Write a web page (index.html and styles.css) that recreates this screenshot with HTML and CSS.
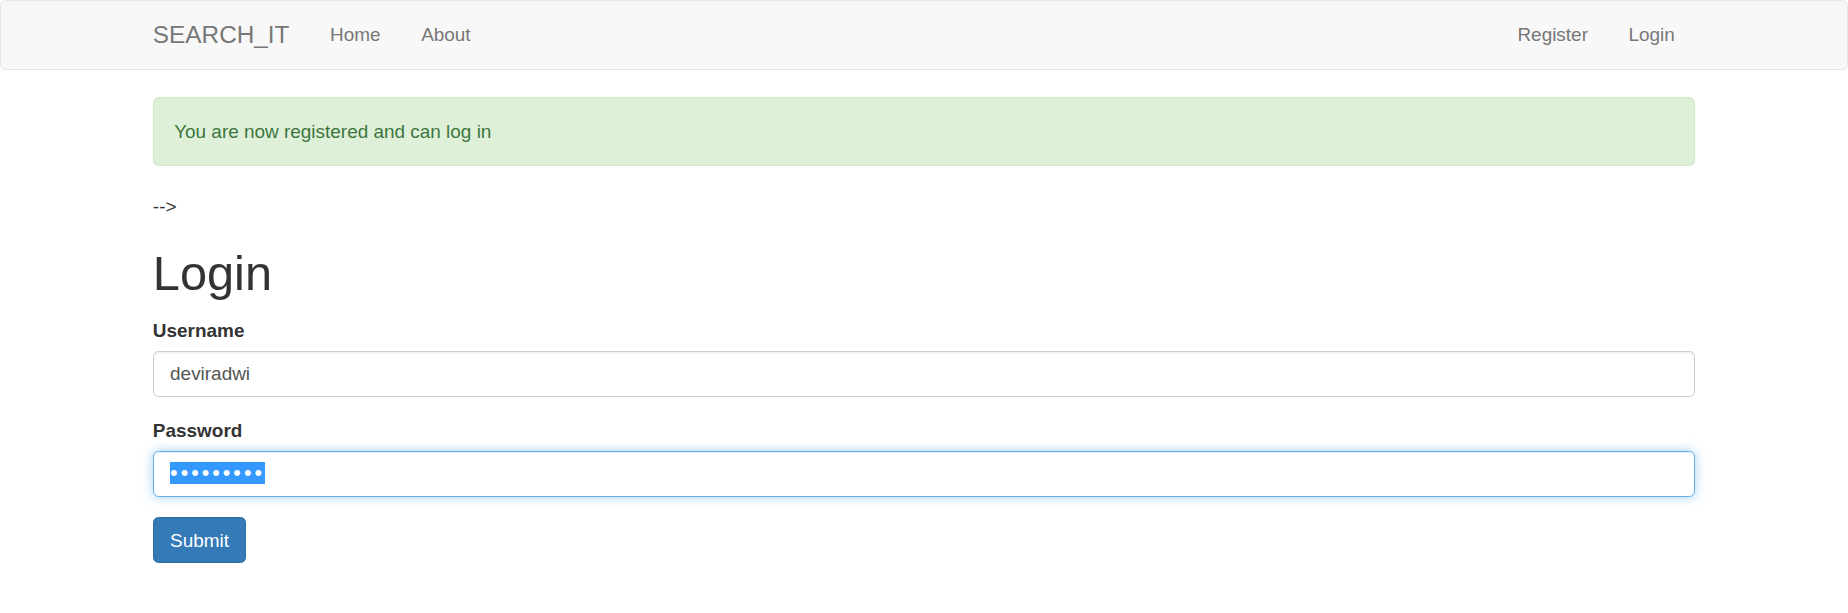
FILE: index.html
```html
<!DOCTYPE html>
<html lang="en">
<head>
<meta charset="utf-8">
<title>SEARCH_IT - Login</title>
<link rel="stylesheet" href="styles.css">
</head>
<body>
<nav class="navbar">
  <div class="container nav-inner">
    <div class="nav-left">
      <a class="brand" href="#">SEARCH_IT</a>
      <ul class="nav-links">
        <li><a href="#">Home</a></li>
        <li><a href="#">About</a></li>
      </ul>
    </div>
    <ul class="nav-links nav-right">
      <li><a href="#">Register</a></li>
      <li><a href="#">Login</a></li>
    </ul>
  </div>
</nav>
<main class="container">
  <div class="alert">You are now registered and can log in</div>
  <p class="stray">--&gt;</p>
  <h1 class="title">Login</h1>
  <form class="login-form">
    <div class="form-group">
      <label class="field-label" for="username">Username</label>
      <input class="form-control" id="username" type="text" value="deviradwi">
    </div>
    <div class="form-group">
      <label class="field-label">Password</label>
      <div class="form-control focused"><span class="selected-mask">•••••••••</span></div>
    </div>
    <button class="btn-primary" type="button">Submit</button>
  </form>
</main>
</body>
</html>
```

FILE: styles.css
```css
html {
  zoom: 1.35286;
}
* {
  box-sizing: border-box;
}
body {
  margin: 0;
  font-family: "Liberation Sans", Arial, sans-serif;
  font-size: 14px;
  line-height: 1.42857;
  color: #333;
  background: #fff;
}
a {
  text-decoration: none;
}
.container {
  width: 1170px;
  margin: 0 auto;
  padding: 0 15px;
}
.navbar {
  min-height: 50px;
  background: #f8f8f8;
  border: 1px solid #e7e7e7;
  border-radius: 4px;
  margin-bottom: 20px;
}
.nav-inner {
  display: flex;
  justify-content: space-between;
  align-items: flex-start;
}
.nav-left {
  display: flex;
}
.brand {
  display: block;
  height: 50px;
  padding: 15px;
  margin-left: -15px;
  font-size: 18px;
  line-height: 20px;
  color: #777;
}
.nav-links {
  display: flex;
  list-style: none;
  margin: 0;
  padding: 0;
}
.nav-links a {
  display: block;
  padding: 15px;
  line-height: 20px;
  color: #777;
}
.alert {
  padding: 15px;
  margin-bottom: 20px;
  border: 1px solid #d6e9c6;
  border-radius: 4px;
  background: #dff0d8;
  color: #3c763d;
}
.stray {
  margin: 0;
}
.title {
  margin: 20px 0 12px;
  font-size: 36px;
  font-weight: 500;
  line-height: 1.1;
}
.form-group {
  margin-bottom: 15px;
}
.field-label {
  display: inline-block;
  margin-bottom: 5px;
  font-weight: 700;
}
.form-control {
  display: block;
  width: 100%;
  height: 34px;
  padding: 6px 12px;
  font-family: inherit;
  font-size: 14px;
  line-height: 1.42857;
  color: #555;
  background: #fff;
  border: 1px solid #ccc;
  border-radius: 4px;
  box-shadow: inset 0 1px 1px rgba(0, 0, 0, .075);
  outline: none;
}
.focused {
  border-color: #66afe9;
  box-shadow: inset 0 1px 1px rgba(0, 0, 0, .075), 0 0 8px rgba(102, 175, 233, .6);
}
.selected-mask {
  display: inline-block;
  background: #3399ff;
  color: #fff;
  font-size: 16px;
  letter-spacing: 2.2px;
  line-height: 16px;
  margin-top: 1px;
}
.btn-primary {
  display: inline-block;
  height: 34px;
  padding: 6px 12px;
  font-family: inherit;
  font-size: 14px;
  line-height: 1.42857;
  color: #fff;
  background: #337ab7;
  border: 1px solid #2e6da4;
  border-radius: 4px;
  cursor: pointer;
}
```
